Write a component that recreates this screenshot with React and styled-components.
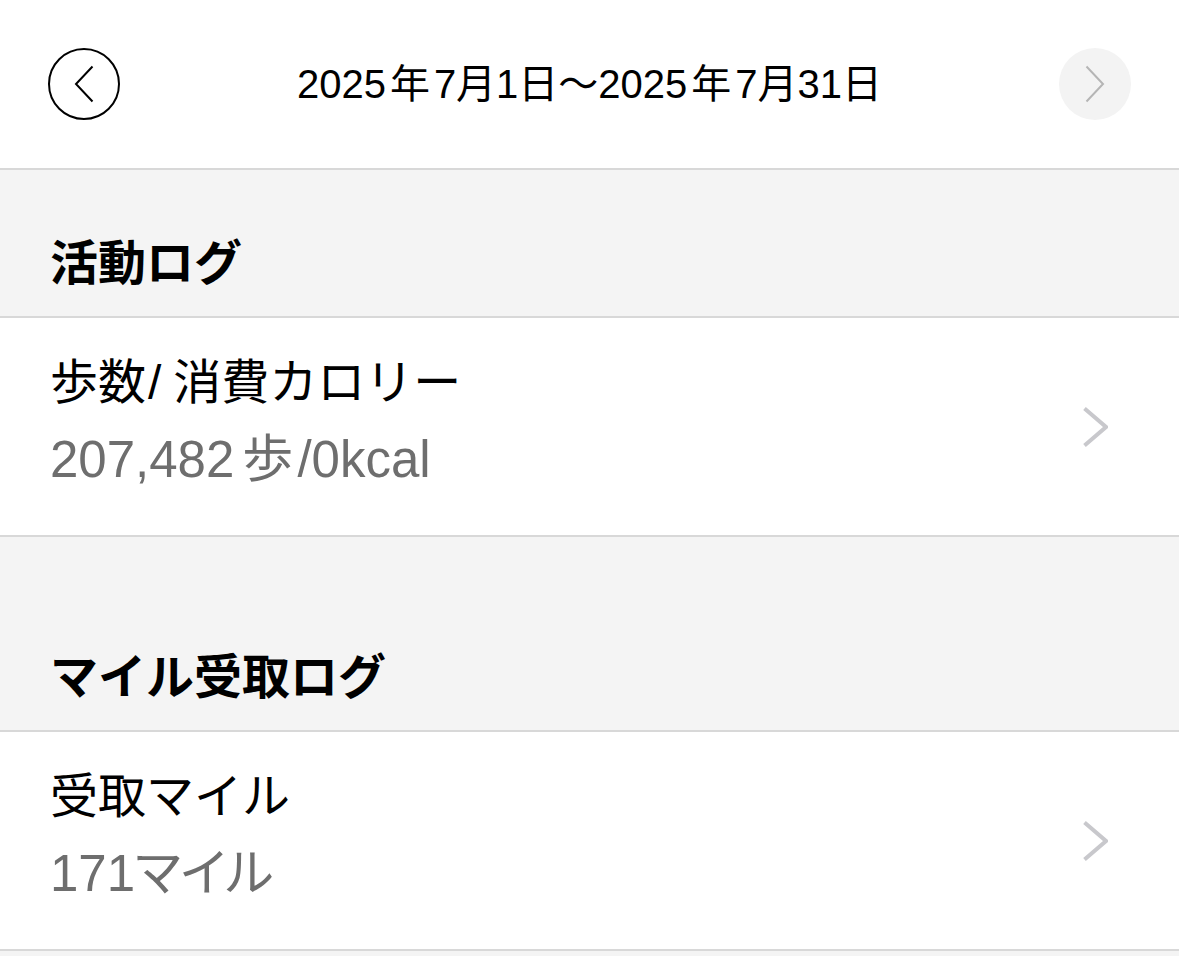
import React from "react";
import styled, { createGlobalStyle } from "styled-components";

const GlobalStyle = createGlobalStyle`
  html, body {
    margin: 0;
    padding: 0;
    background: #f4f4f4;
    font-family: "Liberation Sans", "Noto Sans CJK JP", sans-serif;
    color: #000;
  }
`;

const Page = styled.div`
  width: 1179px;
  min-height: 956px;
  background: #f4f4f4;
`;

const Header = styled.header`
  display: flex;
  align-items: center;
  justify-content: space-between;
  padding: 48px;
  background: #fff;
  border-bottom: 2px solid #d8d8d8;
`;

const CircleButton = styled.button`
  width: 72px;
  height: 72px;
  padding: 0;
  border-radius: 50%;
  display: flex;
  align-items: center;
  justify-content: center;
  box-sizing: border-box;
  border: ${({ disabled }) => (disabled ? "none" : "2px solid #000")};
  background: ${({ disabled }) => (disabled ? "#f3f3f3" : "#fff")};
  color: ${({ disabled }) => (disabled ? "#b5b5b5" : "#000")};
`;

const Period = styled.h1`
  margin: 0;
  font-size: 40px;
  font-weight: 400;
  line-height: 72px;
`;

const Gap = styled.span`
  margin-left: ${({ before = 0 }) => before}px;
  margin-right: ${({ after = 0 }) => after}px;
`;

const SectionHead = styled.div`
  display: flex;
  align-items: flex-end;
  height: ${({ spaced }) => (spaced ? "195px" : "148px")};
  box-sizing: border-box;
  padding: 0 50px 24px;
  border-bottom: 2px solid #d8d8d8;
  font-size: 48px;
  font-weight: 700;
  line-height: 56px;
`;

const Row = styled.div`
  display: flex;
  align-items: center;
  justify-content: space-between;
  padding: 0 71px 0 50px;
  background: #fff;
  border-bottom: 2px solid #d8d8d8;
`;

const RowText = styled.div`
  display: flex;
  flex-direction: column;
  gap: 13px;
  padding: 33px 0 43px;
`;

const RowTitle = styled.div`
  font-size: 48px;
  line-height: 64px;
`;

const RowValue = styled.div`
  font-size: 51px;
  line-height: 64px;
  color: #6e6e6e;
  font-feature-settings: "palt";
`;

const Chevron = ({ dir = "right", w = 20, h = 38, stroke = 2 }) => (
  <svg width={w} height={h} viewBox={`0 0 ${w} ${h}`} fill="none">
    <path
      d={
        dir === "left"
          ? `M${w - 1.5} 1.5 L2 ${h / 2} L${w - 1.5} ${h - 1.5}`
          : `M1.5 1.5 L${w - 2} ${h / 2} L1.5 ${h - 1.5}`
      }
      stroke="currentColor"
      strokeWidth={stroke}
    />
  </svg>
);

const RowChevron = styled.span`
  display: flex;
  color: #c8c8cc;
`;

const items = [
  {
    head: "活動ログ",
    title: (
      <>
        歩数<Gap before={2} after={12}>/</Gap>消費カロリー
      </>
    ),
    value: (
      <>
        207,482<Gap before={8} after={4}>歩</Gap>/0kcal
      </>
    ),
  },
  {
    head: "マイル受取ログ",
    title: "受取マイル",
    value: "171マイル",
    spaced: true,
  },
];

export default function App() {
  return (
    <Page>
      <GlobalStyle />
      <Header>
        <CircleButton>
          <Chevron dir="left" />
        </CircleButton>
        <Period>
          2025<Gap before={4} after={4}>年</Gap>7月1日〜2025<Gap before={4} after={4}>年</Gap>7月31日
        </Period>
        <CircleButton disabled>
          <Chevron dir="right" />
        </CircleButton>
      </Header>
      {items.map((it) => (
        <React.Fragment key={it.head}>
          <SectionHead spaced={it.spaced}>{it.head}</SectionHead>
          <Row>
            <RowText>
              <RowTitle>{it.title}</RowTitle>
              <RowValue>{it.value}</RowValue>
            </RowText>
            <RowChevron>
              <Chevron w={25} h={40} stroke={4} />
            </RowChevron>
          </Row>
        </React.Fragment>
      ))}
    </Page>
  );
}
